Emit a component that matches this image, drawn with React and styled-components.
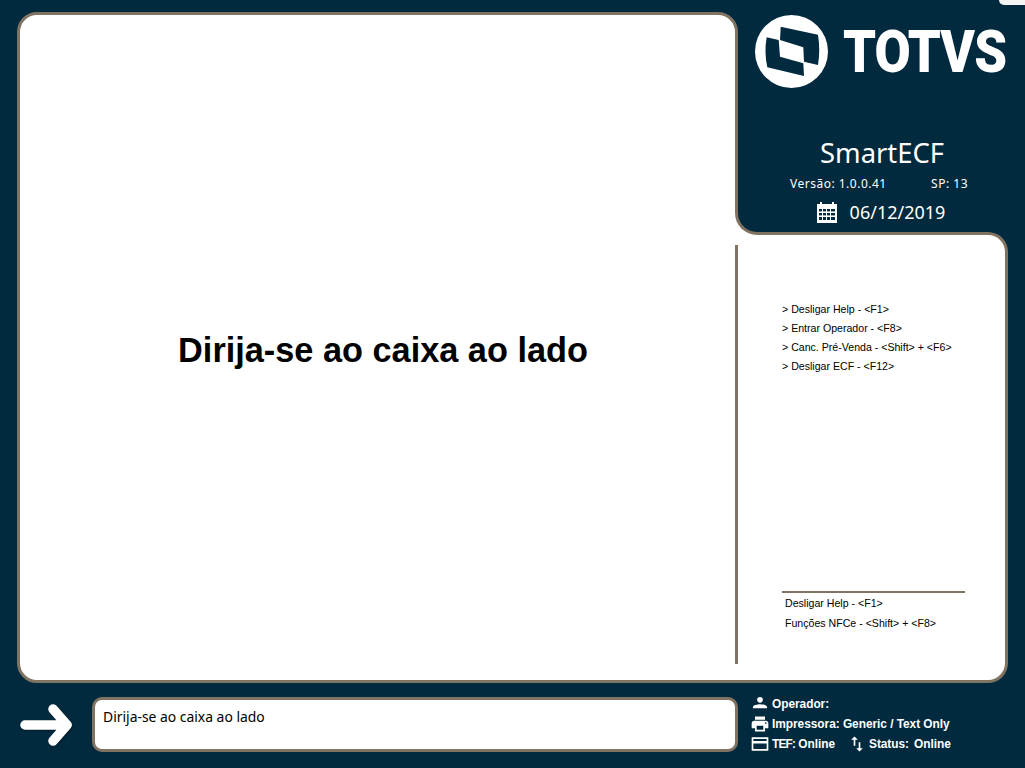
import React from 'react';
import styled, { createGlobalStyle } from 'styled-components';

const navy = '#012a3e';
const tan = '#807361';

const GlobalStyle = createGlobalStyle`
  html, body {
    margin: 0;
    padding: 0;
    background: ${navy};
  }
  #root {
    width: 1025px;
    height: 768px;
    overflow: hidden;
  }
`;

const Screen = styled.div`
  position: relative;
  width: 1025px;
  height: 768px;
  background: ${navy};
  padding: 12px 0 0 17px;
  box-sizing: border-box;
  overflow: hidden;
`;

const Corner = styled.div`
  position: absolute;
  top: 0;
  right: 0;
  width: 26px;
  height: 5px;
  background: #f4f4f4;
  border-bottom-left-radius: 5px;
`;

const Board = styled.div`
  display: flex;
  height: 671px;
`;

const MainPanel = styled.div`
  width: 721px;
  height: 671px;
  flex: none;
  box-sizing: border-box;
  background: #fff;
  border: 3px solid ${tan};
  border-radius: 20px 20px 0 20px;
  display: flex;
  align-items: center;
  justify-content: center;
`;

const Message = styled.div`
  font-family: "Liberation Sans", Arial, sans-serif;
  font-weight: 700;
  font-size: 34.3px;
  color: #000;
  margin-left: 11px;
  margin-top: 6px;
`;

const SideColumn = styled.div`
  width: 273px;
  margin-left: -3px;
  flex: none;
  display: flex;
  flex-direction: column;
`;

const Header = styled.div`
  position: relative;
  z-index: 2;
  height: 203px;
  margin-top: 20px;
  margin-right: 20px;
  padding-left: 17px;
  box-sizing: border-box;
  background: ${navy};
  border-left: 3px solid ${tan};
  border-bottom: 3px solid ${tan};
  border-bottom-left-radius: 22px;
  color: #fff;
  display: flex;
  flex-direction: column;
`;

const LogoRow = styled.div`
  margin-top: -17px;
  display: flex;
  align-items: center;
  gap: 15px;
  white-space: nowrap;
`;

const LogoSvg = styled.svg`
  width: 73px;
  height: 73px;
  flex: none;
`;

const Wordmark = styled.span`
  flex: none;
  font-family: Roboto, "Liberation Sans", sans-serif;
  font-weight: 900;
  font-size: 59px;
  line-height: 73px;
  letter-spacing: -1px;
  transform: scaleX(0.89);
  transform-origin: left center;
  color: #fff;
`;

const Info = styled.div`
  width: 254px;
  flex: none;
  display: flex;
  flex-direction: column;
  align-items: center;
  font-family: "Noto Sans", Tahoma, sans-serif;
`;

const ProductName = styled.div`
  font-size: 27.4px;
  line-height: 36px;
  margin-top: 47px;
`;

const VersionRow = styled.div`
  display: flex;
  width: 178px;
  justify-content: space-between;
  font-size: 12px;
  line-height: 16px;
  letter-spacing: 0.5px;
  margin-top: 5px;
  margin-right: 6px;
`;

const DateRow = styled.div`
  display: flex;
  align-items: center;
  gap: 13px;
  font-size: 18px;
  line-height: 24px;
  margin-top: 8px;
  margin-right: 2px;
`;

const SidePanel = styled.div`
  position: relative;
  z-index: 1;
  flex: 1;
  margin-top: -3px;
  box-sizing: border-box;
  background: #fff;
  border: 3px solid ${tan};
  border-left: none;
  border-radius: 0 20px 20px 0;
  display: flex;
  padding: 10px 0 16px 0;

  &::before {
    content: "";
    position: absolute;
    left: 0;
    top: -23px;
    width: 24px;
    height: 24px;
    background: #fff;
  }
`;

const Separator = styled.div`
  width: 3px;
  flex: none;
  background: ${tan};
`;

const SideContent = styled.div`
  flex: 1;
  display: flex;
  flex-direction: column;
  justify-content: space-between;
  padding: 55px 40px 31px 44px;
  font-family: "Liberation Sans", Arial, sans-serif;
  font-size: 10.6px;
  color: #000;
`;

const ShortcutList = styled.div`
  display: flex;
  flex-direction: column;
`;

const Shortcut = styled.div`
  height: 19px;
  line-height: 19px;
  white-space: nowrap;
`;

const BottomList = styled.div`
  border-top: 2px solid ${tan};
  padding: 0 0 0 3px;
  display: flex;
  flex-direction: column;
`;

const BottomItem = styled.div`
  height: 20px;
  line-height: 20px;
  white-space: nowrap;
`;

const Footer = styled.div`
  display: flex;
  align-items: flex-start;
  margin-top: 14px;
`;

const ArrowBox = styled.div`
  width: 75px;
  height: 54px;
  flex: none;
  display: flex;
  align-items: center;

  svg {
    filter: drop-shadow(1px 1px 1px rgba(0, 0, 0, 0.35));
  }
`;

const InputBox = styled.div`
  width: 646px;
  height: 55px;
  flex: none;
  box-sizing: border-box;
  background: #fff;
  border: 3px solid ${tan};
  border-radius: 10px;
  padding: 8px 8px;
  font-family: "Noto Sans", Tahoma, sans-serif;
  font-size: 13.9px;
  line-height: 18px;
  color: #000;
`;

const StatusBlock = styled.div`
  margin-left: 12px;
  margin-top: -3px;
  display: flex;
  flex-direction: column;
  color: #fff;
  font-family: "Liberation Sans", Arial, sans-serif;
  font-weight: 700;
  font-size: 11.9px;
  letter-spacing: -0.04px;
`;

const StatusRow = styled.div`
  height: 20px;
  display: flex;
  align-items: center;
  white-space: nowrap;
`;

const StatusIcon = styled.svg`
  width: 20px;
  height: 20px;
  flex: none;
  fill: #fff;
  margin-left: ${(p) => p.$left || 0}px;
  margin-right: 2px;
`;

const TefLabel = styled.span`
  letter-spacing: -0.8px;
  margin-right: 3px;
`;

const StatusValue = styled.span`
  margin-left: 5px;
`;

function LogoMark() {
  return (
    <LogoSvg viewBox="0 0 73 73">
      <circle cx="36.5" cy="36.5" r="36.5" fill="#fff" />
      <path d="M25.700 11.700 L63 19.800 Q65.500 35 63 50 L49 46.700 L48.300 32.300 L25 25 Z" fill={navy} />
      <path d="M11.700 22.300 L23.700 25 L25 41.700 L48.300 48.300 L49 61 L12.300 52.300 Q9 37 11.700 22.300 Z" fill={navy} />
    </LogoSvg>
  );
}

function CalendarIcon() {
  return (
    <svg width="20" height="22" viewBox="0 0 20 22" fill="#fff">
      <path d="M0 3h3V1h2v2h10V1h2v2h3v19H0z" />
      <g fill={navy}>
        <rect x="2" y="8" width="3" height="2.4" />
        <rect x="6" y="8" width="3" height="2.4" />
        <rect x="10" y="8" width="3" height="2.4" />
        <rect x="14" y="8" width="4" height="2.4" />
        <rect x="2" y="12" width="3" height="2.4" />
        <rect x="6" y="12" width="3" height="2.4" />
        <rect x="10" y="12" width="3" height="2.4" />
        <rect x="14" y="12" width="4" height="2.4" />
        <rect x="2" y="16" width="3" height="3" />
        <rect x="6" y="16" width="3" height="3" />
        <rect x="10" y="16" width="3" height="3" />
        <rect x="14" y="16" width="4" height="3" />
      </g>
    </svg>
  );
}

function ArrowIcon() {
  return (
    <svg width="58" height="46" viewBox="0 0 58 46">
      <path
        d="M8 24 H48 M36 8 L50 24 L36 40"
        fill="none"
        stroke="#fff"
        strokeWidth="9.5"
        strokeLinecap="round"
        strokeLinejoin="round"
      />
    </svg>
  );
}

export default function App() {
  return (
    <Screen>
      <GlobalStyle />
      <Corner />
      <Board>
        <MainPanel>
          <Message>Dirija-se ao caixa ao lado</Message>
        </MainPanel>
        <SideColumn>
          <Header>
            <LogoRow>
              <LogoMark />
              <Wordmark>TOTVS</Wordmark>
            </LogoRow>
            <Info>
              <ProductName>SmartECF</ProductName>
              <VersionRow>
                <span>Versão: 1.0.0.41</span>
                <span>SP: 13</span>
              </VersionRow>
              <DateRow>
                <CalendarIcon />
                <span>06/12/2019</span>
              </DateRow>
            </Info>
          </Header>
          <SidePanel>
            <Separator />
            <SideContent>
              <ShortcutList>
                <Shortcut>&gt; Desligar Help - &lt;F1&gt;</Shortcut>
                <Shortcut>&gt; Entrar Operador - &lt;F8&gt;</Shortcut>
                <Shortcut>&gt; Canc. Pré-Venda - &lt;Shift&gt; + &lt;F6&gt;</Shortcut>
                <Shortcut>&gt; Desligar ECF - &lt;F12&gt;</Shortcut>
              </ShortcutList>
              <BottomList>
                <BottomItem>Desligar Help - &lt;F1&gt;</BottomItem>
                <BottomItem>Funções NFCe - &lt;Shift&gt; + &lt;F8&gt;</BottomItem>
              </BottomList>
            </SideContent>
          </SidePanel>
        </SideColumn>
      </Board>
      <Footer>
        <ArrowBox>
          <ArrowIcon />
        </ArrowBox>
        <InputBox>Dirija-se ao caixa ao lado</InputBox>
        <StatusBlock>
          <StatusRow>
            <StatusIcon viewBox="0 0 24 24">
              <circle cx="12" cy="7" r="3.4" />
              <path d="M3.500 17v-1.200c0-2.600 5.500-3.600 8.500-3.600s8.500 1 8.500 3.600V17z" />
            </StatusIcon>
            Operador:
          </StatusRow>
          <StatusRow>
            <StatusIcon viewBox="0 0 24 24">
              <path d="M19 8H5c-1.700 0-3 1.300-3 3v6h4v4h12v-4h4v-6c0-1.700-1.300-3-3-3zm-3 11H8v-5h8v5zm3-7c-.6 0-1-.4-1-1s.4-1 1-1 1 .4 1 1-.4 1-1 1zm-1-9H6v4h12V3z" />
            </StatusIcon>
            Impressora: Generic / Text Only
          </StatusRow>
          <StatusRow>
            <StatusIcon viewBox="0 0 24 24">
              <path fillRule="evenodd" d="M2 4h20v16H2zM4 6h16v2.500H4zM4 11.500h16V18H4z" />
            </StatusIcon>
            <TefLabel>TEF:</TefLabel>Online
            <StatusIcon viewBox="0 0 24 24" $left={12}>
              <path d="M9 3L5 7h3v7h2V7h3L9 3zm7 14v-7h-2v7h-3l4 4 4-4h-3z" />
            </StatusIcon>
            Status:
            <StatusValue>Online</StatusValue>
          </StatusRow>
        </StatusBlock>
      </Footer>
    </Screen>
  );
}
